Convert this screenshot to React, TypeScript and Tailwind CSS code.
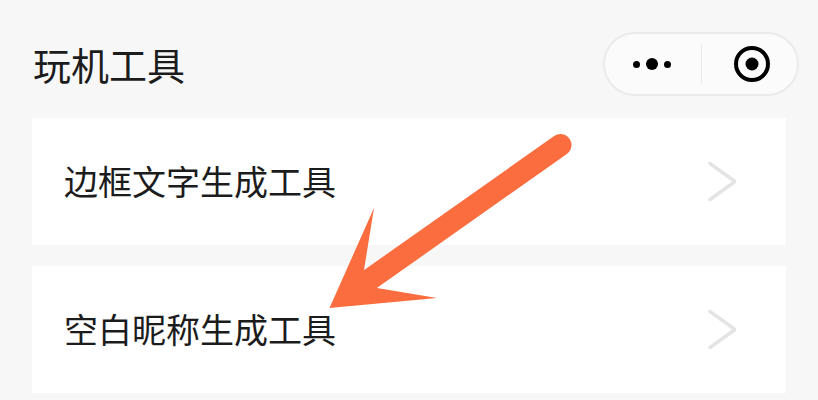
const FONT = "font-['Noto_Sans_CJK_SC','Noto_Sans_CJK_JP',sans-serif]";

function Row({ label }: { label: string }) {
  return (
    <div className="flex h-[127px] items-center justify-between bg-white pl-[32px] pr-[50px]">
      <span className="mt-[-2px] text-[34px] leading-none text-[#1c1c1c]">{label}</span>
      <svg width="28" height="40" viewBox="0 0 28 40" fill="none">
        <path d="M2 1.5 L27 19.5 L2 37.5" stroke="#e4e4e4" strokeWidth="3.5" strokeLinecap="round" strokeLinejoin="miter" />
      </svg>
    </div>
  );
}

export default function App() {
  return (
    <div className={`relative flex h-[400px] w-[818px] flex-col overflow-hidden bg-[#f7f7f7] pl-[32px] pr-[32px] ${FONT}`}>
      <header className="flex h-[118px] shrink-0 items-start justify-between">
        <h1 className="mt-[43px] pl-[1px] text-[38px] font-normal leading-[42px] text-[#1c1c1c]">玩机工具</h1>
        <div className="mr-[-13px] mt-[32px] flex h-[64px] w-[196px] items-center rounded-full border-2 border-[#ebebeb] bg-[#fbfbfb]">
          <div className="flex w-[96px] items-center justify-center gap-[6px] pr-[2px]">
            <span className="h-[7px] w-[7px] rounded-full bg-black" />
            <span className="h-[12px] w-[12px] rounded-full bg-black" />
            <span className="h-[7px] w-[7px] rounded-full bg-black" />
          </div>
          <div className="h-[39px] w-[1px] bg-[#ebebeb]" />
          <div className="flex flex-1 items-center justify-center pl-[5px]">
            <svg width="38" height="38" viewBox="0 0 38 38" fill="none">
              <circle cx="19" cy="19" r="16" stroke="#000" strokeWidth="4" />
              <circle cx="19" cy="19" r="6.5" fill="#000" />
            </svg>
          </div>
        </div>
      </header>
      <main className="flex flex-col gap-[21px]">
        <Row label="边框文字生成工具" />
        <Row label="空白昵称生成工具" />
      </main>
      <svg className="absolute left-0 top-0" width="818" height="400" viewBox="0 0 818 400" fill="none">
        <path d="M560.5 145 L370.5 279" stroke="#fb6d3e" strokeWidth="22" strokeLinecap="round" />
        <path d="M329.5 308 L374 208 L364 270 L377 288 L437 298 Z" fill="#fb6d3e" />
      </svg>
    </div>
  );
}
